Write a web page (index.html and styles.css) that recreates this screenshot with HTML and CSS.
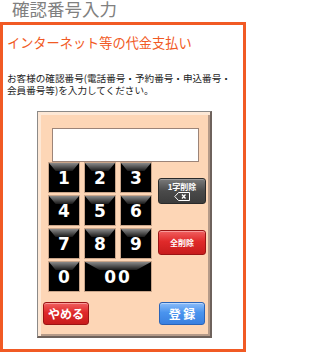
FILE: index.html
```html
<!DOCTYPE html>
<html lang="ja">
<head>
<meta charset="utf-8">
<link rel="stylesheet" href="styles.css">
</head>
<body>
<h1 class="title">確認番号入力</h1>
<div class="box">
  <h2 class="heading">インターネット等の代金支払い</h2>
  <p class="desc">お客様の確認番号(電話番号・予約番号・申込番号・<br>会員番号等)を入力してください。</p>
  <div class="panel">
    <div class="display"></div>
    <div class="pad">
      <div class="keys">
        <div class="key">1</div>
        <div class="key">2</div>
        <div class="key">3</div>
        <div class="key">4</div>
        <div class="key">5</div>
        <div class="key">6</div>
        <div class="key">7</div>
        <div class="key">8</div>
        <div class="key">9</div>
        <div class="key">0</div>
        <div class="key key-wide">00</div>
      </div>
      <div class="side">
        <div class="btn btn-gray btn-bs">
          <span class="small">1字削除</span>
          <svg class="bs-icon" width="16" height="9" viewBox="0 0 16 9"><path d="M4.5 0.5 H15.5 V8.5 H4.5 L0.8 4.5 Z" fill="none" stroke="#fff" stroke-width="1"/><path d="M8 2.5 L11.5 6.5 M11.5 2.5 L8 6.5" stroke="#fff" stroke-width="1.3"/></svg>
        </div>
        <div class="btn btn-red btn-clear"><span class="small">全削除</span></div>
      </div>
    </div>
    <div class="actions">
      <div class="btn btn-red btn-action">やめる</div>
      <div class="btn btn-blue btn-action">登 録</div>
    </div>
  </div>
</div>
</body>
</html>
```
FILE: styles.css
```css
html, body {
  margin: 0;
  padding: 0;
  background: #fff;
}
body {
  width: 250px;
  height: 356px;
  overflow: hidden;
  font-family: "Noto Sans CJK JP", "Noto Sans", sans-serif;
}
.title {
  margin: 0;
  height: 22px;
  padding-left: 12px;
  box-sizing: border-box;
  font-size: 17.5px;
  line-height: 18px;
  font-weight: normal;
  color: #808080;
}
.box {
  width: 240px;
  height: 324px;
  border: 3px solid #f15a24;
  box-sizing: content-box;
}
.heading {
  margin: 0;
  padding: 9px 0 0 4px;
  font-size: 13.2px;
  line-height: 18px;
  font-weight: normal;
  color: #f15a24;
}
.desc {
  margin: 0;
  padding: 21px 0 0 4px;
  font-size: 9.6px;
  line-height: 11.5px;
  color: #222;
  letter-spacing: 0;
}
.panel {
  margin: 15px 0 0 34px;
  width: 175px;
  height: 227px;
  box-sizing: border-box;
  background: #fdd6b6;
  border: 1px solid #8c8a88;
  border-right: 2px solid #6e625c;
  border-bottom: 2px solid #6e625c;
  box-shadow: inset 3px 3px 0 #fde8d6, inset -2px -2px 0 #b59a88;
  padding: 16px 0 0 14px;
  display: flex;
  flex-direction: column;
}
.display {
  width: 145px;
  height: 32px;
  background: #fff;
  border: 1px solid #9c8478;
  margin-left: 0;
}
.pad {
  display: flex;
  margin-top: 1px;
  margin-left: -3px;
}
.keys {
  display: grid;
  grid-template-columns: 30px 30px 30px;
  grid-auto-rows: 29px;
  column-gap: 6px;
  row-gap: 4px;
}
.key {
  position: relative;
  background: #000;
  color: #fff;
  font-family: "DejaVu Sans", sans-serif;
  font-weight: bold;
  font-size: 17px;
  line-height: 31px;
  text-align: center;
  outline: 1px solid #c9a58a;
  overflow: hidden;
}
.key::before {
  content: "";
  position: absolute;
  left: 0;
  top: 0;
  right: 0;
  height: 8px;
  background: linear-gradient(#8a8a8a, #1a1a1a);
  clip-path: polygon(0 0, 100% 0, 78% 100%, 22% 100%);
}
.key-wide {
  grid-column: span 2;
  letter-spacing: 2px;
}
.side {
  display: flex;
  flex-direction: column;
  margin-left: 7px;
}
.btn {
  box-sizing: border-box;
  color: #fff;
  font-weight: bold;
  text-align: center;
  border-radius: 3px;
  display: flex;
  flex-direction: column;
  align-items: center;
  justify-content: center;
}
.small {
  font-size: 8px;
  line-height: 9px;
}
.btn-gray {
  background: linear-gradient(#7a7a7a, #4a4a4a 50%, #3c3c3c);
  border: 1px solid #2a2a2a;
  box-shadow: inset 0 1px 0 #9a9a9a;
}
.btn-bs {
  width: 48px;
  height: 26px;
  margin-top: 15px;
}
.bs-icon {
  display: block;
  margin-top: 1px;
}
.btn-red {
  background: linear-gradient(#f06060, #e02a2a 45%, #c81c1c);
  border: 1px solid #9a1414;
  box-shadow: inset 0 1px 0 #f89a9a;
}
.btn-clear {
  width: 48px;
  height: 25px;
  margin-top: 26px;
}
.actions {
  display: flex;
  justify-content: space-between;
  margin-top: 11px;
  margin-left: -9px;
  width: 162px;
}
.btn-action {
  width: 46px;
  height: 23px;
  font-size: 12px;
  line-height: 14px;
}
.btn-blue {
  background: linear-gradient(#8cbcf8, #4a94ee 45%, #3a80e0);
  border: 1px solid #2a64b8;
  box-shadow: inset 0 1px 0 #b8d6fc;
}
```
